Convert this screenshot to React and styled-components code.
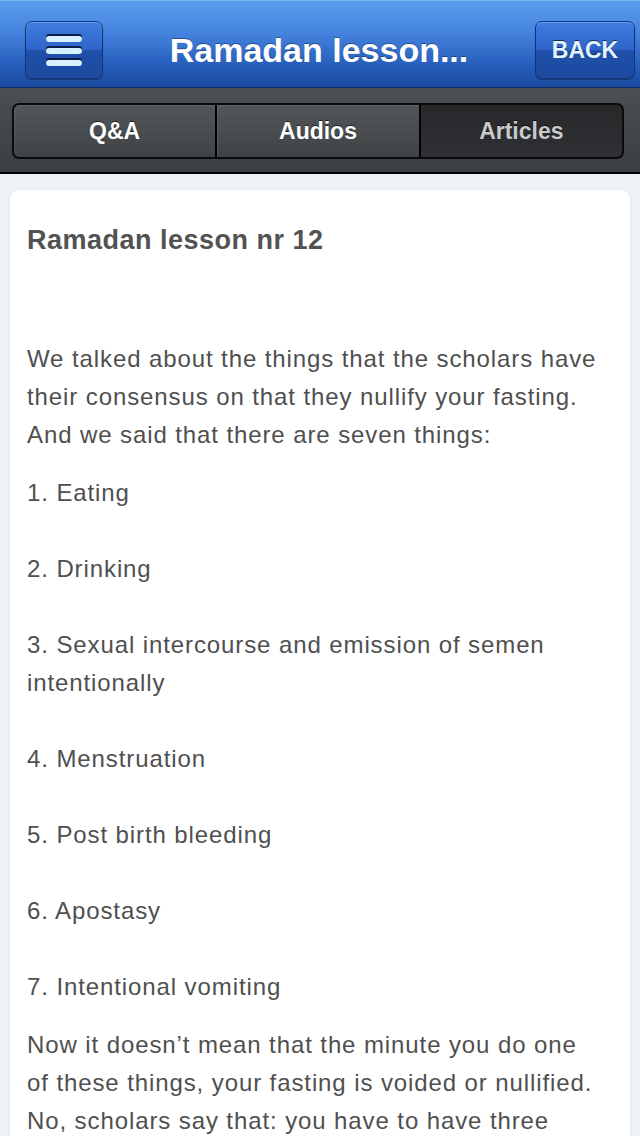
import React from "react";
import styled, { createGlobalStyle } from "styled-components";

const GlobalStyle = createGlobalStyle`
  html, body {
    margin: 0;
    padding: 0;
    background: #eef2f5;
    font-family: "Liberation Sans", Arial, sans-serif;
  }
`;

const items = [
  "1. Eating",
  "2. Drinking",
  "3. Sexual intercourse and emission of semen intentionally",
  "4. Menstruation",
  "5. Post birth bleeding",
  "6. Apostasy",
  "7. Intentional vomiting",
];

const tabs = [
  { label: "Q&A", active: false },
  { label: "Audios", active: false },
  { label: "Articles", active: true },
];

const MenuIcon = () => (
  <svg width="38" height="34" viewBox="0 0 38 34">
    {[1, 13, 25].map((y) => (
      <g key={y}>
        <rect x="1" y={y} width="36" height="8" rx="3" fill="#0b1f4a" />
        <rect x="1" y={y + 2} width="36" height="6" rx="3" fill="#d6f1ff" />
      </g>
    ))}
  </svg>
);

const App = () => {
  return (
    <Page>
      <GlobalStyle />
      <Header>
        <BlueButton $width={78}>
          <MenuIcon />
        </BlueButton>
        <Title>Ramadan lesson...</Title>
        <BlueButton $width={100}>
          <BackText>BACK</BackText>
        </BlueButton>
      </Header>
      <TabBar>
        <Segmented>
          {tabs.map((t) => (
            <Segment key={t.label} $active={t.active}>
              {t.label}
            </Segment>
          ))}
        </Segmented>
      </TabBar>
      <Content>
        <Card>
          <Heading>Ramadan lesson nr 12</Heading>
          <P>
            We talked about the things that the scholars have their consensus
            on that they nullify your fasting. And we said that there are seven
            things:
          </P>
          <List>
            {items.map((i) => (
              <Item key={i}>{i}</Item>
            ))}
          </List>
          <P>
            Now it doesn’t mean that the minute you do one of these things, your
            fasting is voided or nullified. No, scholars say that: you have to
            have three conditions to be met in order for these things to
            nullify your fasting.
          </P>
        </Card>
      </Content>
    </Page>
  );
};
export default App;

const Page = styled.div`
  width: 640px;
  height: 1136px;
  overflow: hidden;
  background: #eef2f5;
`;

const Header = styled.div`
  height: 66px;
  display: flex;
  align-items: flex-start;
  padding: 20px 5px 0 25px;
  background: linear-gradient(#5a9cec 0%, #4685e0 35%, #2a62c0 70%, #1a4a9e 100%);
  border-top: 1px solid #7cb4f2;
  border-bottom: 1px solid #0e2c66;
`;

const BlueButton = styled.div`
  width: ${(p) => p.$width}px;
  height: 58px;
  flex-shrink: 0;
  box-sizing: border-box;
  border: 1px solid #12357a;
  border-radius: 7px;
  display: flex;
  align-items: center;
  justify-content: center;
  background: linear-gradient(#3f7ddf 0%, #2f66cb 48%, #1f4fa8 52%, #1c4aa0 100%);
  box-shadow: inset 0 1px 0 rgba(140, 190, 255, 0.6), 0 1px 1px rgba(0, 0, 0, 0.3);
`;

const Title = styled.div`
  flex: 1;
  text-align: center;
  color: #fff;
  font-size: 34px;
  font-weight: bold;
  line-height: 58px;
  text-shadow: 0 -1px 0 rgba(0, 0, 0, 0.35);
`;

const BackText = styled.span`
  color: #e2f5ff;
  font-size: 23px;
  font-weight: bold;
  text-shadow: 0 -1px 0 rgba(0, 0, 0, 0.6);
`;

const TabBar = styled.div`
  height: 86px;
  box-sizing: border-box;
  padding: 15px 16px 15px 12px;
  background: linear-gradient(#4c4f52, #3c3f42);
  border-bottom: 2px solid #000;
`;

const Segmented = styled.div`
  height: 56px;
  box-sizing: border-box;
  display: flex;
  border: 2px solid #0a0a0a;
  border-radius: 7px;
  overflow: hidden;
  background: #000;
  gap: 2px;
`;

const Segment = styled.div`
  flex: 1;
  display: flex;
  align-items: center;
  justify-content: center;
  font-size: 23px;
  font-weight: bold;
  color: ${(p) => (p.$active ? "#c9cacb" : "#fff")};
  background: ${(p) =>
    p.$active
      ? "linear-gradient(#26282a, #2e3033)"
      : "linear-gradient(#54575a, #404346)"};
  box-shadow: ${(p) =>
    p.$active ? "none" : "inset 1px 1px 0 rgba(255,255,255,0.08)"};
  text-shadow: 0 -1px 0 rgba(0, 0, 0, 0.6);
`;

const Content = styled.div`
  padding: 16px 10px 0;
`;

const Card = styled.div`
  background: #fff;
  border-radius: 8px;
  box-shadow: 0 0 2px rgba(0, 0, 0, 0.12);
  padding: 31px 26px 40px 17px;
  color: #4f4f4f;
  font-size: 24px;
  line-height: 38px;
  letter-spacing: 0.9px;
`;

const Heading = styled.div`
  font-size: 27px;
  font-weight: bold;
  letter-spacing: 0.5px;
  color: #525252;
  margin-bottom: 81px;
`;

const P = styled.p`
  margin: 0 0 20px;
`;

const List = styled.div`
  display: flex;
  flex-direction: column;
  gap: 38px;
  margin-bottom: 20px;
`;

const Item = styled.div``;
